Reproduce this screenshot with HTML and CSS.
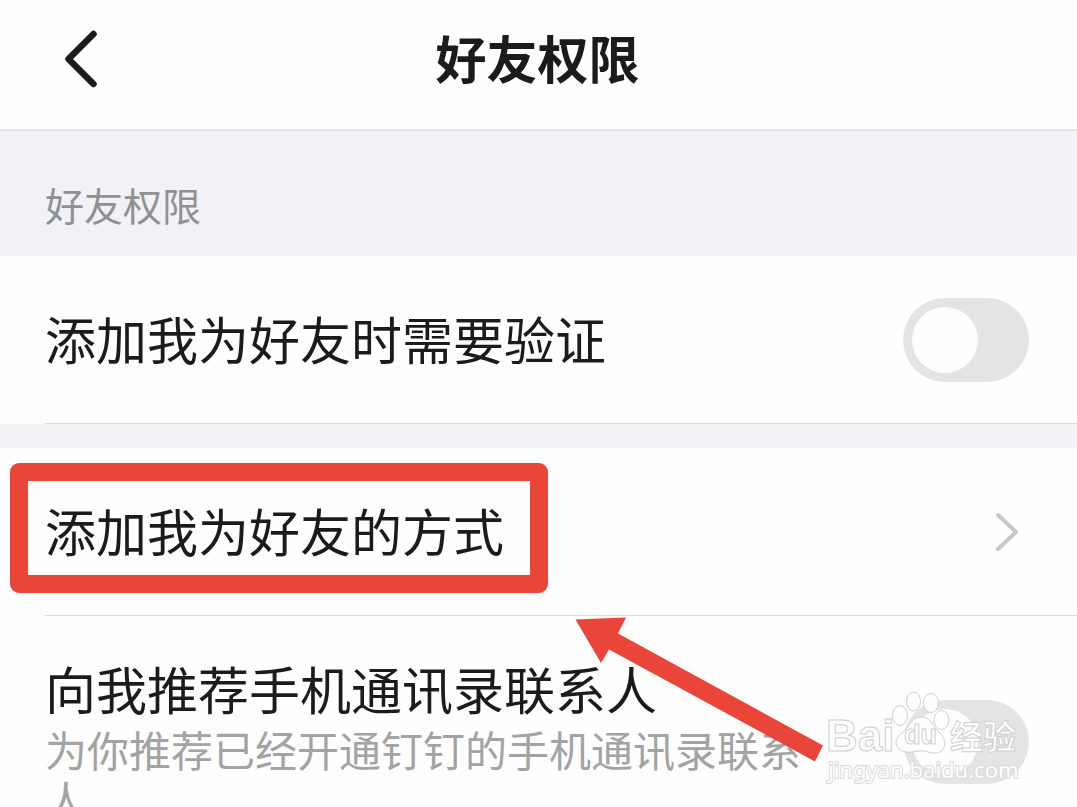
FILE: index.html
```html
<!DOCTYPE html>
<html lang="zh-CN">
<head>
<meta charset="utf-8">
<meta name="viewport" content="width=device-width, initial-scale=1">
<title>好友权限</title>
<link rel="stylesheet" href="styles.css">
</head>
<body>
<div class="page">
  <header class="navbar">
    <button class="back" type="button" aria-label="返回">
      <svg width="36" height="60" viewBox="0 0 36 60" fill="none" stroke="#1a1b1d" stroke-width="6.5" stroke-linecap="round" stroke-linejoin="round"><path d="M30.500 5L5.500 30L30.500 55"/></svg>
    </button>
    <h1 class="title">好友权限</h1>
  </header>
  <main>
    <h2 class="section-label">好友权限</h2>
    <section class="group">
      <div class="row">
        <label class="row-title" for="verify">添加我为好友时需要验证</label>
        <input class="switch" type="checkbox" role="switch" id="verify">
      </div>
    </section>
    <section class="group">
      <a class="row" href="#ways">
        <span class="row-title highlight">添加我为好友的方式</span>
        <svg class="chevron" width="24" height="42" viewBox="0 0 24 42" fill="none" stroke="#c8c8c9" stroke-width="4" stroke-linecap="round" stroke-linejoin="round"><path d="M3 4L21 21L3 38"/></svg>
      </a>
      <div class="row row-tall">
        <div class="row-text">
          <label class="row-title" for="recommend">向我推荐手机通讯录联系人</label>
          <p class="row-note">为你推荐已经开通钉钉的手机通讯录联系人</p>
        </div>
        <input class="switch" type="checkbox" role="switch" id="recommend">
      </div>
    </section>
  </main>
  <svg class="arrow" width="250" height="146" viewBox="0 0 250 146" aria-hidden="true"><path fill="#e94539" d="M0.500 2.500L51 0.500L43 16.500L248 128.500L240 144.500L34 32.500L26 46Z"/></svg>
  <svg class="watermark" width="200" height="100" viewBox="0 0 200 100" aria-hidden="true">
    <g class="mark">
      <ellipse cx="76" cy="27.500" rx="7.500" ry="10"/>
      <ellipse cx="89.500" cy="13.500" rx="7" ry="9.500"/>
      <ellipse cx="107" cy="15" rx="7.500" ry="9.500"/>
      <ellipse cx="117.500" cy="32" rx="7.500" ry="9.500"/>
      <path d="M97 29C107 29 108 38 115 44C124 52 122 65 111 65C104 65 101 62 96 63C90 63 87 65 82 64C70 62 69 51 78 45C86 39 87 29 97 29Z"/>
    </g>
    <text class="mark mark-latin" x="2" y="63">Bai</text>
    <text class="mark mark-du" x="80" y="56">du</text>
    <text class="mark mark-cjk" x="126" y="61">经验</text>
    <text class="mark-url" x="4" y="90">jingyan.baidu.com</text>
  </svg>
</div>
</body>
</html>
```
FILE: styles.css
```css
* {
  box-sizing: border-box;
}

body {
  margin: 0;
  background: #fefefe;
  color: #1a1b1d;
  font-family: "Noto Sans CJK SC", sans-serif;
}

.page {
  position: relative;
  height: 100vh;
  overflow: hidden;
}

.navbar {
  display: grid;
  grid-template-columns: 160px 1fr 160px;
  align-items: center;
  height: 131px;
  padding-bottom: 12px;
  border-bottom: 2px solid #e1e2e4;
}

.back {
  justify-self: start;
  display: flex;
  margin-left: 63px;
  padding: 0;
  border: 0;
  background: none;
}

.title {
  margin: 0;
  padding: 0 2px 4px 0;
  font-size: 51px;
  line-height: 64px;
  font-weight: 700;
  text-align: center;
}

.section-label {
  margin: 0;
  padding: 45px 45px 24px;
  background: #f1f1f6;
  color: #8e9194;
  font-size: 39px;
  line-height: 56px;
  font-weight: 400;
}

.group + .group {
  border-top: 24px solid #f1f1f6;
}

.row {
  position: relative;
  display: flex;
  align-items: center;
  justify-content: space-between;
  min-height: 168px;
  padding: 0 48px 0 45px;
  color: inherit;
  text-decoration: none;
}

.row::after {
  content: "";
  position: absolute;
  left: 45px;
  right: 0;
  bottom: 0;
  border-bottom: 1px solid #dedfe1;
}

.row-tall {
  padding-top: 40px;
  padding-bottom: 40px;
}

.row-text {
  width: 760px;
}

.row-title {
  display: block;
  padding-bottom: 4px;
  font-size: 51px;
  line-height: 64px;
}

.row-note {
  margin: 0;
  padding-bottom: 4px;
  color: #a3a3a3;
  font-size: 42px;
  line-height: 50px;
}

.highlight {
  position: relative;
}

.highlight::before {
  content: "";
  position: absolute;
  inset: -35px -44px -27px -35px;
  border: 18px solid #e94539;
  border-radius: 9px;
}

.switch {
  appearance: none;
  flex: none;
  width: 126px;
  height: 84px;
  margin: 0;
  padding: 9px;
  border-radius: 42px;
  background: #e3e4e6;
}

.switch::before {
  content: "";
  display: block;
  width: 66px;
  height: 66px;
  border-radius: 50%;
  background: #fefefe;
}

.switch:checked::before {
  margin-left: auto;
}

.chevron {
  margin-right: 10px;
}

.arrow {
  position: absolute;
  left: 575px;
  top: 617px;
}

.watermark {
  position: absolute;
  left: 824px;
  top: 688px;
}

.mark {
  fill: #fefefe;
  stroke: #cfcfd0;
  stroke-width: 1px;
}

.mark-latin {
  font: 700 44px "Liberation Sans", sans-serif;
}

.mark-du {
  font: 700 27px "Liberation Sans", sans-serif;
}

.mark-cjk {
  font: 700 33px "Noto Sans CJK SC", sans-serif;
}

.mark-url {
  fill: #fefefe;
  stroke: #d9d9da;
  stroke-width: 2px;
  paint-order: stroke;
  font: 400 22px "Noto Sans", sans-serif;
}
```
